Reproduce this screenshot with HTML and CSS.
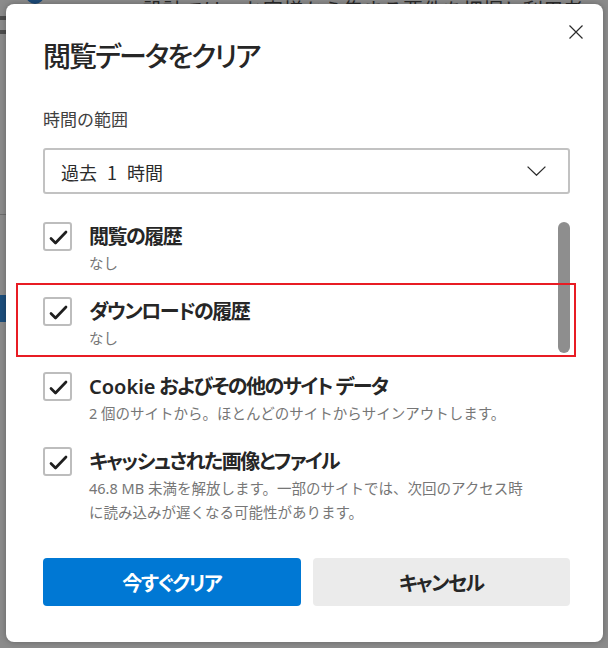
FILE: index.html
```html
<!DOCTYPE html>
<html lang="ja">
<head>
<meta charset="utf-8">
<title>閲覧データをクリア</title>
<link rel="stylesheet" href="styles.css">
</head>
<body>
<div class="bg-page">
  <div class="bg-top">
    <span class="bg-logo"></span>
    <span class="bg-line">設計では、お客様から集まる要件を把握し利用者へ</span>
  </div>
  <div class="bg-side">
    <div class="bg-bar"></div>
    <div class="bg-bar"></div>
    <div class="bg-gap"></div>
    <div class="bg-divider"></div>
    <div class="bg-blue"></div>
  </div>
</div>

<div class="dialog" role="dialog" aria-label="閲覧データをクリア">
  <button class="close" aria-label="閉じる">
    <svg width="14" height="14" viewBox="0 0 14 14"><path d="M0.5 0.5 L13.5 13.5 M13.5 0.5 L0.5 13.5" stroke="#2b2b2b" stroke-width="1.2" fill="none"/></svg>
  </button>
  <h1 class="title">閲覧データをクリア</h1>
  <div class="field-label">時間の範囲</div>
  <div class="select">
    <span class="select-value">過去 1 時間</span>
    <svg class="chevron" width="19" height="10" viewBox="0 0 19 10"><path d="M0.6 0.6 L9.5 9.2 L18.4 0.6" stroke="#2b2b2b" stroke-width="1.3" fill="none"/></svg>
  </div>

  <div class="list-wrap">
    <ul class="list">
      <li class="item">
        <span class="cb"><svg width="24" height="24" viewBox="0 0 24 24"><path d="M5 13.5 L9.5 18 L20 7" stroke="#1f1f1f" stroke-width="2.7" fill="none" stroke-linecap="round" stroke-linejoin="round"/></svg></span>
        <div class="item-text">
          <div class="item-title">閲覧の履歴</div>
          <div class="item-sub">なし</div>
        </div>
      </li>
      <li class="item">
        <span class="cb"><svg width="24" height="24" viewBox="0 0 24 24"><path d="M5 13.5 L9.5 18 L20 7" stroke="#1f1f1f" stroke-width="2.7" fill="none" stroke-linecap="round" stroke-linejoin="round"/></svg></span>
        <div class="item-text">
          <div class="item-title">ダウンロードの履歴</div>
          <div class="item-sub">なし</div>
        </div>
      </li>
      <li class="item">
        <span class="cb"><svg width="24" height="24" viewBox="0 0 24 24"><path d="M5 13.5 L9.5 18 L20 7" stroke="#1f1f1f" stroke-width="2.7" fill="none" stroke-linecap="round" stroke-linejoin="round"/></svg></span>
        <div class="item-text">
          <div class="item-title"><span class="latin">Cookie</span> およびその他のサイト データ</div>
          <div class="item-sub">2 個のサイトから。ほとんどのサイトからサインアウトします。</div>
        </div>
      </li>
      <li class="item">
        <span class="cb"><svg width="24" height="24" viewBox="0 0 24 24"><path d="M5 13.5 L9.5 18 L20 7" stroke="#1f1f1f" stroke-width="2.7" fill="none" stroke-linecap="round" stroke-linejoin="round"/></svg></span>
        <div class="item-text">
          <div class="item-title">キャッシュされた画像とファイル</div>
          <div class="item-sub">46.8 MB 未満を解放します。一部のサイトでは、次回のアクセス時<br>に読み込みが遅くなる可能性があります。</div>
        </div>
      </li>
    </ul>
    <div class="scrollbar"><div class="thumb"></div></div>
    <div class="highlight"></div>
  </div>

  <div class="actions">
    <button class="btn btn-primary">今すぐクリア</button>
    <button class="btn btn-secondary">キャンセル</button>
  </div>
</div>
</body>
</html>
```

FILE: styles.css
```css
* {
  box-sizing: border-box;
  margin: 0;
  padding: 0;
}

html, body {
  width: 608px;
  height: 648px;
  overflow: hidden;
}

body {
  background: #8b8b8b;
  font-family: "Noto Sans", "Noto Sans CJK JP", sans-serif;
  color: #262626;
  position: relative;
}

/* dimmed page behind the modal */
.bg-page {
  display: flex;
  flex-direction: column;
}

.bg-top {
  display: flex;
  align-items: flex-end;
  height: 6px;
  overflow: hidden;
}

.bg-logo {
  width: 18px;
  height: 18px;
  border-radius: 50%;
  background: #1c4a78;
  margin-left: 26px;
  margin-bottom: 2px;
  flex: none;
}

.bg-line {
  margin-left: 99px;
  font-size: 20px;
  line-height: 20px;
  margin-bottom: -14px;
  color: #2a2a2a;
  white-space: nowrap;
  font-family: "Noto Sans CJK JP", sans-serif;
}

.bg-side {
  width: 6px;
  display: flex;
  flex-direction: column;
}

.bg-bar {
  height: 4px;
  background: #4d4d4d;
  margin-top: 10px;
}

.bg-gap {
  height: 180px;
}

.bg-divider {
  height: 1px;
  background: #6e6e6e;
}

.bg-blue {
  height: 27px;
  margin-top: 80px;
  background: #1c4e7c;
}

/* modal dialog */
.dialog {
  position: absolute;
  left: 6px;
  top: 4px;
  width: 597px;
  height: 638px;
  background: #fff;
  border-radius: 8px;
  box-shadow: 0 0 6px rgba(0, 0, 0, 0.28);
  padding: 33px 33px 36px 37px;
  display: flex;
  flex-direction: column;
}

.close {
  position: absolute;
  left: 563px;
  top: 21px;
  width: 14px;
  height: 14px;
  border: 0;
  background: none;
  display: flex;
}

.title {
  font-family: "Noto Sans CJK JP", sans-serif;
  font-feature-settings: "palt";
  font-size: 28px;
  line-height: 36px;
  letter-spacing: -2px;
  font-weight: 500;
  color: #262626;
}

.field-label {
  margin-top: 34px;
  font-family: "Noto Sans CJK JP", sans-serif;
  font-size: 17px;
  line-height: 24px;
  color: #404040;
  font-weight: 400;
}

.select {
  margin-top: 17px;
  height: 46px;
  border: 2px solid #c2c2c2;
  border-radius: 3px;
  display: flex;
  align-items: center;
  justify-content: space-between;
  padding: 2px 22px 0 16px;
}

.select-value {
  font-family: "Noto Sans CJK JP", sans-serif;
  font-size: 18px;
  word-spacing: 6px;
  color: #2b2b2b;
}

.chevron {
  margin-top: -2px;
}

.list-wrap {
  margin-top: 28px;
  display: flex;
  position: relative;
}

.list {
  list-style: none;
  flex: 1;
  display: flex;
  flex-direction: column;
  gap: 22px;
}

.item {
  display: flex;
  align-items: flex-start;
  gap: 17px;
}

.cb {
  flex: none;
  width: 29px;
  height: 29px;
  border: 2px solid #bdbdbd;
  border-radius: 3px;
  display: flex;
  align-items: center;
  justify-content: center;
}

.item-text {
  padding-top: 2px;
}

.item-title {
  font-family: "Noto Sans", "Noto Sans CJK JP", sans-serif;
  font-feature-settings: "palt";
  font-size: 20px;
  line-height: 26px;
  letter-spacing: -1.5px;
  font-weight: 600;
  color: #262626;
}

.latin {
  letter-spacing: 0;
}

.item-sub {
  margin-top: 1px;
  font-family: "Noto Sans", "Noto Sans CJK JP", sans-serif;
  font-size: 14.5px;
  line-height: 24px;
  color: #767676;
}

.scrollbar {
  flex: none;
  width: 12px;
}

.thumb {
  height: 131px;
  border-radius: 6px;
  background: #8e8e8e;
}

.highlight {
  position: absolute;
  left: -27px;
  top: 61px;
  width: 560px;
  height: 74px;
  border: 2px solid #e81c24;
  pointer-events: none;
}

.actions {
  margin-top: auto;
  display: grid;
  grid-template-columns: 1fr 1fr;
  gap: 12px;
}

.btn {
  height: 48px;
  border: 0;
  border-radius: 4px;
  font-family: "Noto Sans CJK JP", sans-serif;
  font-feature-settings: "palt";
  font-size: 20px;
  letter-spacing: -1.5px;
  font-weight: 700;
}

.btn-primary {
  background: #0078d4;
  color: #fff;
}

.btn-secondary {
  background: #ebebeb;
  color: #262626;
}
```
